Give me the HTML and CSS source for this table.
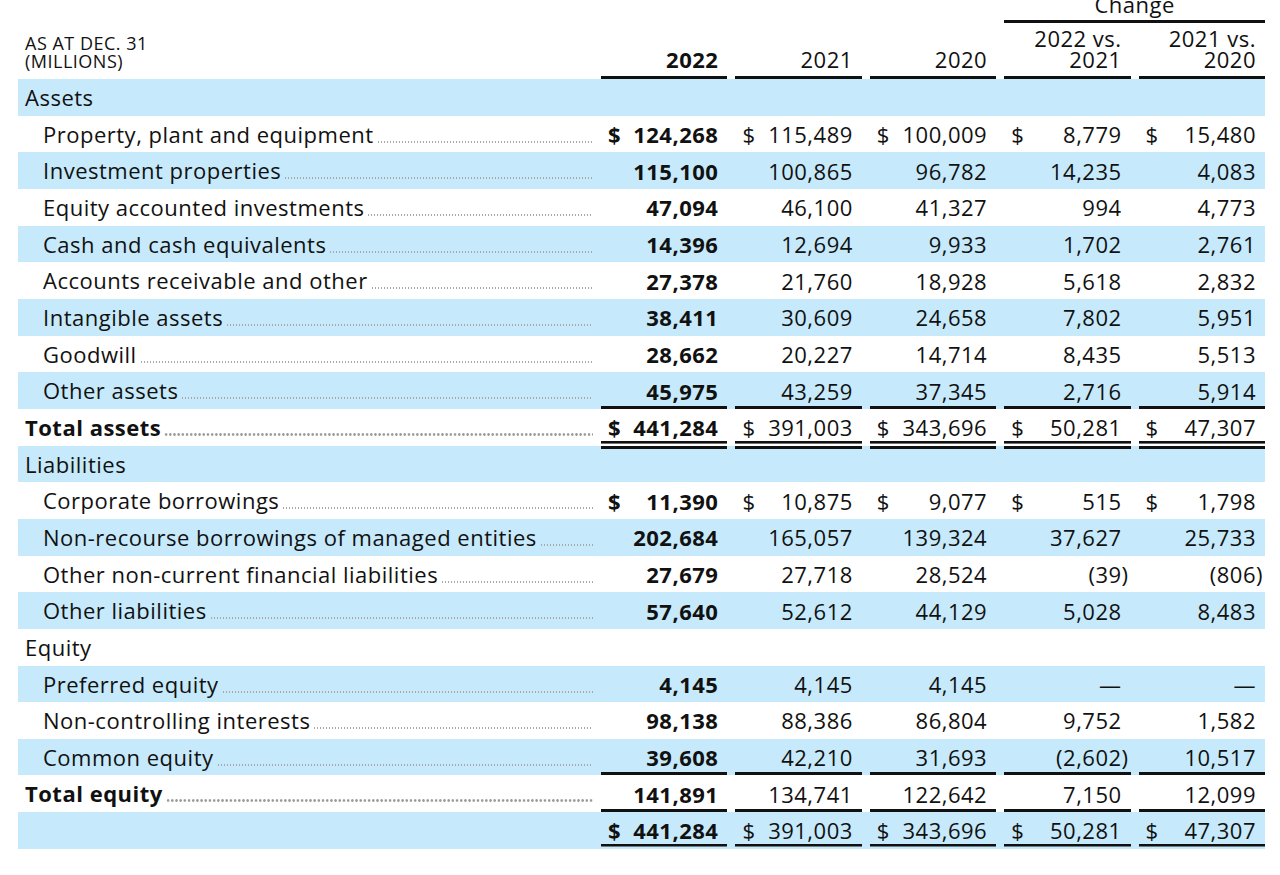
FILE: index.html
```html
<!DOCTYPE html>
<html lang="en">
<head>
    <meta charset="UTF-8">
    <title>Balance sheet summary</title>
    <link rel="stylesheet" href="styles.css">
</head>
<body>
    <div class="statement">
        <div class="head">
            <div class="change">Change</div>
            <div class="as-at">AS AT DEC. 31<br>(MILLIONS)</div>
            <div class="year current">2022</div>
            <div class="year">2021</div>
            <div class="year">2020</div>
            <div class="year">2022 vs.<br>2021</div>
            <div class="year">2021 vs.<br>2020</div>
        </div>

        <!-- Assets -->
        <div class="row shade">
            <div class="label section">Assets</div>
            <div></div><div></div><div></div><div></div><div></div>
        </div>
        <div class="row">
            <div class="label">Property, plant and equipment<span class="dots"></span></div>
            <div class="num"><span>$</span><span class="val">124,268</span></div>
            <div class="num"><span>$</span><span class="val">115,489</span></div>
            <div class="num"><span>$</span><span class="val">100,009</span></div>
            <div class="num"><span>$</span><span class="val">8,779</span></div>
            <div class="num"><span>$</span><span class="val">15,480</span></div>
        </div>
        <div class="row shade">
            <div class="label">Investment properties<span class="dots"></span></div>
            <div class="num"><span class="val">115,100</span></div>
            <div class="num"><span class="val">100,865</span></div>
            <div class="num"><span class="val">96,782</span></div>
            <div class="num"><span class="val">14,235</span></div>
            <div class="num"><span class="val">4,083</span></div>
        </div>
        <div class="row">
            <div class="label">Equity accounted investments<span class="dots"></span></div>
            <div class="num"><span class="val">47,094</span></div>
            <div class="num"><span class="val">46,100</span></div>
            <div class="num"><span class="val">41,327</span></div>
            <div class="num"><span class="val">994</span></div>
            <div class="num"><span class="val">4,773</span></div>
        </div>
        <div class="row shade">
            <div class="label">Cash and cash equivalents<span class="dots"></span></div>
            <div class="num"><span class="val">14,396</span></div>
            <div class="num"><span class="val">12,694</span></div>
            <div class="num"><span class="val">9,933</span></div>
            <div class="num"><span class="val">1,702</span></div>
            <div class="num"><span class="val">2,761</span></div>
        </div>
        <div class="row">
            <div class="label">Accounts receivable and other<span class="dots"></span></div>
            <div class="num"><span class="val">27,378</span></div>
            <div class="num"><span class="val">21,760</span></div>
            <div class="num"><span class="val">18,928</span></div>
            <div class="num"><span class="val">5,618</span></div>
            <div class="num"><span class="val">2,832</span></div>
        </div>
        <div class="row shade">
            <div class="label">Intangible assets<span class="dots"></span></div>
            <div class="num"><span class="val">38,411</span></div>
            <div class="num"><span class="val">30,609</span></div>
            <div class="num"><span class="val">24,658</span></div>
            <div class="num"><span class="val">7,802</span></div>
            <div class="num"><span class="val">5,951</span></div>
        </div>
        <div class="row">
            <div class="label">Goodwill<span class="dots"></span></div>
            <div class="num"><span class="val">28,662</span></div>
            <div class="num"><span class="val">20,227</span></div>
            <div class="num"><span class="val">14,714</span></div>
            <div class="num"><span class="val">8,435</span></div>
            <div class="num"><span class="val">5,513</span></div>
        </div>
        <div class="row shade">
            <div class="label">Other assets<span class="dots"></span></div>
            <div class="num"><span class="val">45,975</span></div>
            <div class="num"><span class="val">43,259</span></div>
            <div class="num"><span class="val">37,345</span></div>
            <div class="num"><span class="val">2,716</span></div>
            <div class="num"><span class="val">5,914</span></div>
        </div>
        <div class="row total total-assets">
            <div class="label">Total assets<span class="dots"></span></div>
            <div class="num"><span>$</span><span class="val">441,284</span></div>
            <div class="num"><span>$</span><span class="val">391,003</span></div>
            <div class="num"><span>$</span><span class="val">343,696</span></div>
            <div class="num"><span>$</span><span class="val">50,281</span></div>
            <div class="num"><span>$</span><span class="val">47,307</span></div>
        </div>

        <!-- Liabilities -->
        <div class="row shade">
            <div class="label section">Liabilities</div>
            <div></div><div></div><div></div><div></div><div></div>
        </div>
        <div class="row">
            <div class="label">Corporate borrowings<span class="dots"></span></div>
            <div class="num"><span>$</span><span class="val">11,390</span></div>
            <div class="num"><span>$</span><span class="val">10,875</span></div>
            <div class="num"><span>$</span><span class="val">9,077</span></div>
            <div class="num"><span>$</span><span class="val">515</span></div>
            <div class="num"><span>$</span><span class="val">1,798</span></div>
        </div>
        <div class="row shade">
            <div class="label">Non-recourse borrowings of managed entities<span class="dots"></span></div>
            <div class="num"><span class="val">202,684</span></div>
            <div class="num"><span class="val">165,057</span></div>
            <div class="num"><span class="val">139,324</span></div>
            <div class="num"><span class="val">37,627</span></div>
            <div class="num"><span class="val">25,733</span></div>
        </div>
        <div class="row">
            <div class="label">Other non-current financial liabilities<span class="dots"></span></div>
            <div class="num"><span class="val">27,679</span></div>
            <div class="num"><span class="val">27,718</span></div>
            <div class="num"><span class="val">28,524</span></div>
            <div class="num"><span class="val neg">(39)</span></div>
            <div class="num"><span class="val neg">(806)</span></div>
        </div>
        <div class="row shade">
            <div class="label">Other liabilities<span class="dots"></span></div>
            <div class="num"><span class="val">57,640</span></div>
            <div class="num"><span class="val">52,612</span></div>
            <div class="num"><span class="val">44,129</span></div>
            <div class="num"><span class="val">5,028</span></div>
            <div class="num"><span class="val">8,483</span></div>
        </div>

        <!-- Equity -->
        <div class="row">
            <div class="label section">Equity</div>
            <div></div><div></div><div></div><div></div><div></div>
        </div>
        <div class="row shade">
            <div class="label">Preferred equity<span class="dots"></span></div>
            <div class="num"><span class="val">4,145</span></div>
            <div class="num"><span class="val">4,145</span></div>
            <div class="num"><span class="val">4,145</span></div>
            <div class="num"><span class="val">&mdash;</span></div>
            <div class="num"><span class="val">&mdash;</span></div>
        </div>
        <div class="row">
            <div class="label">Non-controlling interests<span class="dots"></span></div>
            <div class="num"><span class="val">98,138</span></div>
            <div class="num"><span class="val">88,386</span></div>
            <div class="num"><span class="val">86,804</span></div>
            <div class="num"><span class="val">9,752</span></div>
            <div class="num"><span class="val">1,582</span></div>
        </div>
        <div class="row shade">
            <div class="label">Common equity<span class="dots"></span></div>
            <div class="num"><span class="val">39,608</span></div>
            <div class="num"><span class="val">42,210</span></div>
            <div class="num"><span class="val">31,693</span></div>
            <div class="num"><span class="val neg">(2,602)</span></div>
            <div class="num"><span class="val">10,517</span></div>
        </div>
        <div class="row total total-equity">
            <div class="label">Total equity<span class="dots"></span></div>
            <div class="num"><span class="val">141,891</span></div>
            <div class="num"><span class="val">134,741</span></div>
            <div class="num"><span class="val">122,642</span></div>
            <div class="num"><span class="val">7,150</span></div>
            <div class="num"><span class="val">12,099</span></div>
        </div>
        <div class="row shade grand-total">
            <div class="label"></div>
            <div class="num"><span>$</span><span class="val">441,284</span></div>
            <div class="num"><span>$</span><span class="val">391,003</span></div>
            <div class="num"><span>$</span><span class="val">343,696</span></div>
            <div class="num"><span>$</span><span class="val">50,281</span></div>
            <div class="num"><span>$</span><span class="val">47,307</span></div>
        </div>
    </div>
</body>
</html>
```

FILE: styles.css
```css
* {
    box-sizing: border-box;
    margin: 0;
    padding: 0;
}

body {
    font-family: "Open Sans", "Liberation Sans", sans-serif;
    color: #111;
    background: #fff;
    letter-spacing: 0.5px;
}

.statement {
    width: 1247px;
    margin: -7px 0 0 18px;
}

/* header */
.head,
.row {
    display: grid;
    grid-template-columns: 575px repeat(5, 1fr);
}

.head {
    align-items: end;
}

.change {
    grid-column: 5 / 7;
    margin: 0 0 5px 8px;
    padding-bottom: 5px;
    border-bottom: 3px solid #111;
    font-size: 22px;
    line-height: 22px;
    text-align: center;
}

.as-at {
    grid-column: 1;
    padding: 0 0 9px 7px;
    font-size: 18px;
    line-height: 18px;
}

.year {
    margin-left: 8px;
    padding: 0 9px 6px 0;
    border-bottom: 3px solid #111;
    font-size: 22px;
    line-height: 21px;
    text-align: right;
}

.year.current {
    font-weight: 700;
}

/* body rows */
.row {
    height: 36.67px;
    font-size: 22px;
    line-height: 36px;
}

.row.shade {
    background: #c6eafb;
}

.label {
    display: flex;
    align-items: baseline;
    padding-left: 25px;
    white-space: nowrap;
}

.label.section {
    padding-left: 7px;
}

.dots {
    flex: 1;
    height: 2px;
    margin: 0 0 0 3px;
    background: radial-gradient(circle, #a8a8a8 0.8px, transparent 1.1px) 0 0 / 3px 2px repeat-x;
}

.total .label {
    padding-left: 7px;
    font-weight: 700;
}

.total .dots {
    height: 3px;
    margin-left: 3px;
    background: radial-gradient(circle, #9a9a9a 1.1px, transparent 1.5px) 0 0 / 4.2px 3px repeat-x;
}

.num {
    display: flex;
    align-items: center;
    margin-left: 8px;
    padding: 0 9px 0 7px;
}

.num .val {
    margin-left: auto;
}

.num .neg {
    margin-right: -7px;
}

.row .num:nth-child(2) {
    font-weight: 700;
}

/* rules under the figures */
.total-assets .num {
    box-shadow: 0 -3px #111, 0 3px #111;
    background: linear-gradient(#111, #111) 0 calc(100% - 1.7px) / 100% 2.6px no-repeat;
}

.total-equity .num {
    box-shadow: 0 -3px #111;
    background: linear-gradient(#111, #111) 0 100% / 100% 3px no-repeat;
}

.grand-total .num {
    box-shadow: 0 3.5px #111;
    background: linear-gradient(#111, #111) 0 calc(100% - 2.3px) / 100% 2.5px no-repeat;
}
```
